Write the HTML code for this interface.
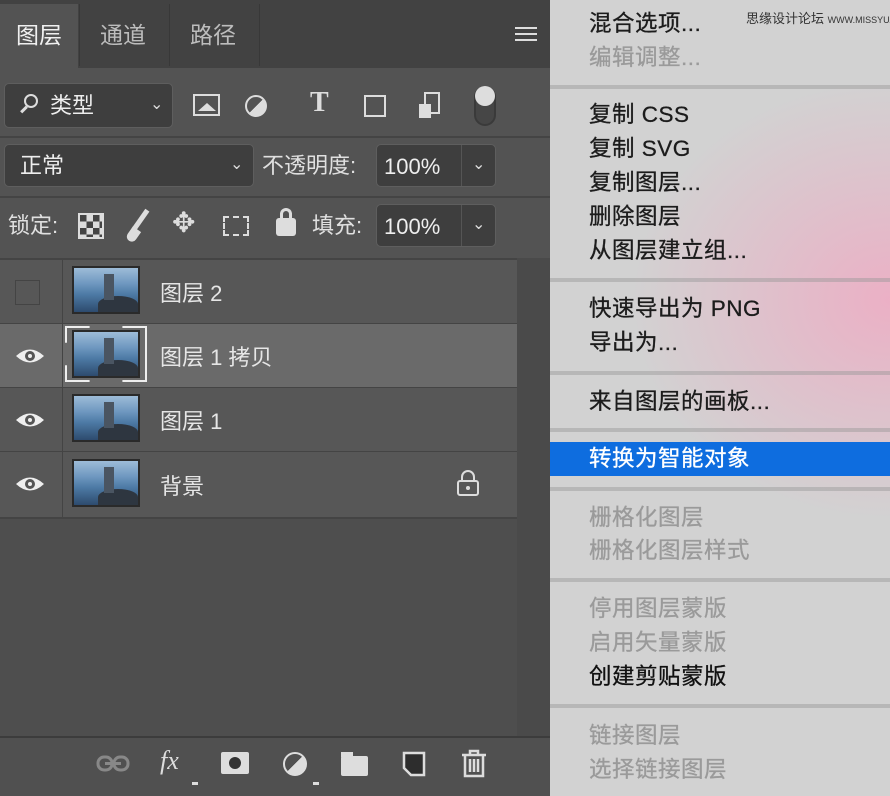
<!DOCTYPE html>
<html><head><meta charset="utf-8"><style>
*{margin:0;padding:0;box-sizing:border-box}
body{width:890px;height:796px;overflow:hidden;position:relative;background:#4e4e4e;font-family:"Liberation Sans","Noto Sans CJK SC",sans-serif}
.a{position:absolute}
.t{color:#e6e6e6;font-size:22px;white-space:nowrap;line-height:26px}
.box{position:absolute;border:1px solid #5e5e5e;background:#3e3e3e;border-radius:5px}
.menu{position:absolute;left:550px;top:0;width:340px;height:796px;background:
radial-gradient(ellipse 260px 220px at 340px 300px,rgba(240,170,195,0.85),rgba(240,170,195,0) 100%),#d2d2d2}
.mi{position:absolute;left:39px;font-size:22.5px;letter-spacing:0.5px;color:#1c1c1c;white-space:nowrap;line-height:34px;-webkit-text-stroke:0.3px currentColor}
.dis{color:#9a9a9a}
.sep{position:absolute;left:0;width:340px;height:4px;background:rgba(150,150,150,0.45)}
.row{position:absolute;left:0;width:517px;height:63px;background:#575757}
.thumb{position:absolute;left:72px;width:68px;height:48px;background:linear-gradient(180deg,#9dbcd8 0%,#6f98c0 35%,#4d7aa5 60%,#2d4b6e 100%);border:2px solid #2a2a2a;overflow:hidden}
.thumb:after{content:"";position:absolute;left:30px;top:6px;width:10px;height:26px;background:#4a5562}
.thumb:before{content:"";position:absolute;left:24px;top:28px;width:40px;height:16px;background:#2e3640;border-radius:50% 50% 0 0}
</style></head><body>
<div class="a" style="left:0;top:0;width:550px;height:68px;background:#424242"></div>
<div class="a" style="left:0;top:4px;width:78px;height:64px;background:#535353"></div>
<div class="a" style="left:79px;top:4px;width:1px;height:62px;background:#383838"></div>
<div class="a" style="left:169px;top:4px;width:1px;height:62px;background:#383838"></div>
<div class="a" style="left:259px;top:4px;width:1px;height:62px;background:#383838"></div>
<div class="a t" style="left:16px;top:22px;font-size:23px;color:#f0f0f0">图层</div>
<div class="a t" style="left:100px;top:22px;font-size:23px;color:#bdbdbd">通道</div>
<div class="a t" style="left:190px;top:22px;font-size:23px;color:#bdbdbd">路径</div>
<div class="a" style="left:515px;top:27px;width:22px;height:14px;border-top:2px solid #ddd;border-bottom:2px solid #ddd"><div style="margin-top:4px;height:2px;background:#ddd"></div></div>
<div class="a" style="left:0;top:68px;width:550px;height:68px;background:#535353"></div>
<div class="a" style="left:0;top:136px;width:550px;height:60px;background:#535353;border-top:2px solid #444"></div>
<div class="a" style="left:0;top:196px;width:550px;height:62px;background:#535353;border-top:2px solid #444"></div>
<div class="box" style="left:4px;top:83px;width:169px;height:45px"></div>
<div class="a" style="left:24px;top:94px;width:14px;height:14px;border:2px solid #ddd;border-radius:50%"></div>
<div class="a" style="left:20px;top:108px;width:8px;height:3px;background:#ddd;transform:rotate(-45deg)"></div>
<div class="a t" style="left:50px;top:93px;color:#eee">类型</div>
<div class="a t" style="left:150px;top:92px;font-size:16px;color:#ddd">⌄</div>
<div class="a" style="left:193px;top:94px;width:27px;height:22px;border:2px solid #ddd"><div style="position:absolute;left:3px;bottom:3px;width:0;height:0;border-left:9px solid transparent;border-right:9px solid transparent;border-bottom:8px solid #ddd"></div></div>
<div class="a" style="left:245px;top:95px;width:22px;height:22px;border:2px solid #ddd;border-radius:50%;background:linear-gradient(135deg,transparent 50%,#ddd 50%)"></div>
<div class="a t" style="left:310px;top:90px;font-size:28px;font-family:'Liberation Serif',serif;color:#ddd;font-weight:bold">T</div>
<div class="a" style="left:364px;top:95px;width:22px;height:22px;border:2px solid #ddd"></div>
<div class="a" style="left:424px;top:92px;width:16px;height:22px;border:2px solid #ddd"></div>
<div class="a" style="left:419px;top:104px;width:12px;height:14px;background:#ddd"></div>
<div class="a" style="left:474px;top:86px;width:22px;height:40px;border:2px solid #3a3a3a;border-radius:11px;background:#464646"></div>
<div class="a" style="left:475px;top:86px;width:20px;height:20px;border-radius:50%;background:#ddd"></div>
<div class="box" style="left:4px;top:144px;width:250px;height:43px"></div>
<div class="a t" style="left:20px;top:153px;color:#eee">正常</div>
<div class="a t" style="left:230px;top:152px;font-size:16px;color:#ddd">⌄</div>
<div class="a t" style="left:262px;top:153px;color:#e0e0e0">不透明度:</div>
<div class="box" style="left:376px;top:144px;width:120px;height:43px"></div>
<div class="a" style="left:461px;top:145px;width:1px;height:41px;background:#555"></div>
<div class="a t" style="left:384px;top:154px;color:#eee">100%</div>
<div class="a t" style="left:472px;top:152px;font-size:16px;color:#ddd">⌄</div>
<div class="a t" style="left:8px;top:213px;color:#e0e0e0">锁定:</div>
<div class="a" style="left:78px;top:213px;width:26px;height:26px;background:
conic-gradient(#ddd 25%,#444 0 50%,#ddd 0 75%,#444 0) 0 0/13px 13px;border:2px solid #ddd"></div>
<div class="a" style="left:138px;top:208px;width:5px;height:24px;background:#ddd;transform:rotate(35deg)"></div>
<div class="a" style="left:128px;top:228px;width:10px;height:14px;background:#ddd;border-radius:0 0 6px 6px;transform:rotate(35deg)"></div>
<div class="a t" style="left:172px;top:210px;font-size:28px;color:#ddd">✥</div>
<div class="a" style="left:223px;top:216px;width:26px;height:20px;border:2px dashed #ddd"></div>
<div class="a" style="left:276px;top:218px;width:20px;height:18px;background:#ddd;border-radius:3px"></div>
<div class="a" style="left:280px;top:208px;width:12px;height:14px;border:3px solid #ddd;border-radius:6px 6px 0 0;border-bottom:none"></div>
<div class="a t" style="left:312px;top:213px;color:#e0e0e0">填充:</div>
<div class="box" style="left:376px;top:204px;width:120px;height:43px"></div>
<div class="a" style="left:461px;top:205px;width:1px;height:41px;background:#555"></div>
<div class="a t" style="left:384px;top:214px;color:#eee">100%</div>
<div class="a t" style="left:472px;top:212px;font-size:16px;color:#ddd">⌄</div>
<div class="a" style="left:0;top:258px;width:550px;height:2px;background:#444"></div>
<div class="a" style="left:517px;top:258px;width:33px;height:480px;background:#4a4a4a"></div>
<div class="row" style="top:260px"></div>
<div class="row" style="top:324px;background:#6a6a6a"></div>
<div class="row" style="top:388px"></div>
<div class="row" style="top:452px;height:65px"></div>
<div class="a" style="left:0;top:323px;width:517px;height:1px;background:#444"></div>
<div class="a" style="left:0;top:387px;width:517px;height:1px;background:#444"></div>
<div class="a" style="left:0;top:451px;width:517px;height:1px;background:#444"></div>
<div class="a" style="left:0;top:517px;width:517px;height:2px;background:#444"></div>
<div class="a" style="left:62px;top:260px;width:1px;height:258px;background:#444"></div>
<div class="a" style="left:15px;top:280px;width:25px;height:25px;border:1px solid #444"></div>
<div class="thumb" style="top:266px"></div>
<div class="thumb" style="top:330px"></div>
<div class="a" style="left:65px;top:326px;width:82px;height:56px;border:2px solid #eee;clip-path:polygon(0 0,30% 0,30% 8%,70% 8%,70% 0,100% 0,100% 100%,70% 100%,70% 92%,30% 92%,30% 100%,0 100%,0 70%,5% 70%,5% 30%,0 30%);"></div>
<div class="thumb" style="top:394px"></div>
<div class="thumb" style="top:459px"></div>
<div class="a t" style="left:160px;top:281px">图层 2</div>
<div class="a t" style="left:160px;top:345px">图层 1 拷贝</div>
<div class="a t" style="left:160px;top:409px">图层 1</div>
<div class="a t" style="left:160px;top:474px">背景</div>
<svg class="a" style="left:15px;top:343px" width="30" height="26" viewBox="0 0 30 26"><path d="M1 13Q15 0 29 13Q15 26 1 13Z" fill="#eee"/><circle cx="15" cy="13" r="5" fill="#555"/><circle cx="15" cy="13" r="2" fill="#eee"/></svg>
<svg class="a" style="left:15px;top:407px" width="30" height="26" viewBox="0 0 30 26"><path d="M1 13Q15 0 29 13Q15 26 1 13Z" fill="#eee"/><circle cx="15" cy="13" r="5" fill="#555"/><circle cx="15" cy="13" r="2" fill="#eee"/></svg>
<svg class="a" style="left:15px;top:471px" width="30" height="26" viewBox="0 0 30 26"><path d="M1 13Q15 0 29 13Q15 26 1 13Z" fill="#eee"/><circle cx="15" cy="13" r="5" fill="#555"/><circle cx="15" cy="13" r="2" fill="#eee"/></svg>
<svg class="a" style="left:456px;top:470px" width="24" height="26" viewBox="0 0 24 26"><rect x="2" y="11" width="20" height="14" rx="2" fill="none" stroke="#ddd" stroke-width="2"/><path d="M6 11V7a6 6 0 0 1 12 0v4" fill="none" stroke="#ddd" stroke-width="2"/><circle cx="12" cy="18" r="2" fill="#ddd"/></svg>
<div class="a" style="left:0;top:736px;width:550px;height:2px;background:#3c3c3c"></div>
<div class="a" style="left:0;top:738px;width:550px;height:58px;background:#505050"></div>
<svg class="a" style="left:95px;top:752px" width="36" height="24" viewBox="0 0 36 24"><rect x="3" y="5" width="14" height="13" rx="6" fill="none" stroke="#888" stroke-width="3"/><rect x="19" y="5" width="14" height="13" rx="6" fill="none" stroke="#888" stroke-width="3"/><rect x="10" y="10" width="16" height="3" fill="#888"/></svg>
<div class="a" style="left:160px;top:746px;color:#ddd;font-size:26px;font-style:italic;font-family:'Liberation Serif',serif">fx</div>
<div class="a" style="left:192px;top:782px;width:6px;height:3px;background:#ddd"></div>
<div class="a" style="left:221px;top:752px;width:28px;height:22px;background:#ddd;border-radius:2px"><div style="position:absolute;left:8px;top:5px;width:12px;height:12px;border-radius:50%;background:#333"></div></div>
<div class="a" style="left:283px;top:752px;width:24px;height:24px;border:2px solid #ddd;border-radius:50%;background:linear-gradient(135deg,transparent 50%,#ddd 50%)"></div>
<div class="a" style="left:313px;top:782px;width:6px;height:3px;background:#ddd"></div>
<div class="a" style="left:341px;top:756px;width:27px;height:20px;background:#ddd;border-radius:2px"></div>
<div class="a" style="left:341px;top:752px;width:12px;height:5px;background:#ddd"></div>
<svg class="a" style="left:402px;top:751px" width="24" height="26" viewBox="0 0 24 26"><path d="M2 2H22V24H9L2 17Z" fill="#2d2d2d" stroke="#ddd" stroke-width="2.5"/></svg>
<svg class="a" style="left:460px;top:748px" width="28" height="30" viewBox="0 0 28 30"><path d="M2 7H26M10 7V3H18V7M5 7V28H23V7M10 11V24M14 11V24M18 11V24" fill="none" stroke="#ddd" stroke-width="2.5"/></svg>
<div class="menu">
<div class="a" style="left:196px;top:8px;font-size:13px;color:#333;white-space:nowrap">思缘设计论坛 <span style="font-size:9px">WWW.MISSYUAN.COM</span></div>
<div class="mi" style="top:7px">混合选项...</div>
<div class="mi dis" style="top:41px">编辑调整...</div>
<div class="sep" style="top:85px"></div>
<div class="mi" style="top:98px">复制 CSS</div>
<div class="mi" style="top:132px">复制 SVG</div>
<div class="mi" style="top:166px">复制图层...</div>
<div class="mi" style="top:200px">删除图层</div>
<div class="mi" style="top:234px">从图层建立组...</div>
<div class="sep" style="top:278px"></div>
<div class="mi" style="top:292px">快速导出为 PNG</div>
<div class="mi" style="top:326px">导出为...</div>
<div class="sep" style="top:371px"></div>
<div class="mi" style="top:385px">来自图层的画板...</div>
<div class="sep" style="top:428px"></div>
<div class="a" style="left:0;top:442px;width:340px;height:34px;background:#0e6ddf"></div>
<div class="mi" style="top:442px;color:#fff">转换为智能对象</div>
<div class="sep" style="top:487px"></div>
<div class="mi dis" style="top:501px">栅格化图层</div>
<div class="mi dis" style="top:534px">栅格化图层样式</div>
<div class="sep" style="top:578px"></div>
<div class="mi dis" style="top:592px">停用图层蒙版</div>
<div class="mi dis" style="top:626px">启用矢量蒙版</div>
<div class="mi" style="top:660px;color:#111">创建剪贴蒙版</div>
<div class="sep" style="top:704px"></div>
<div class="mi dis" style="top:719px">链接图层</div>
<div class="mi dis" style="top:753px">选择链接图层</div>
</div>
</body></html>
